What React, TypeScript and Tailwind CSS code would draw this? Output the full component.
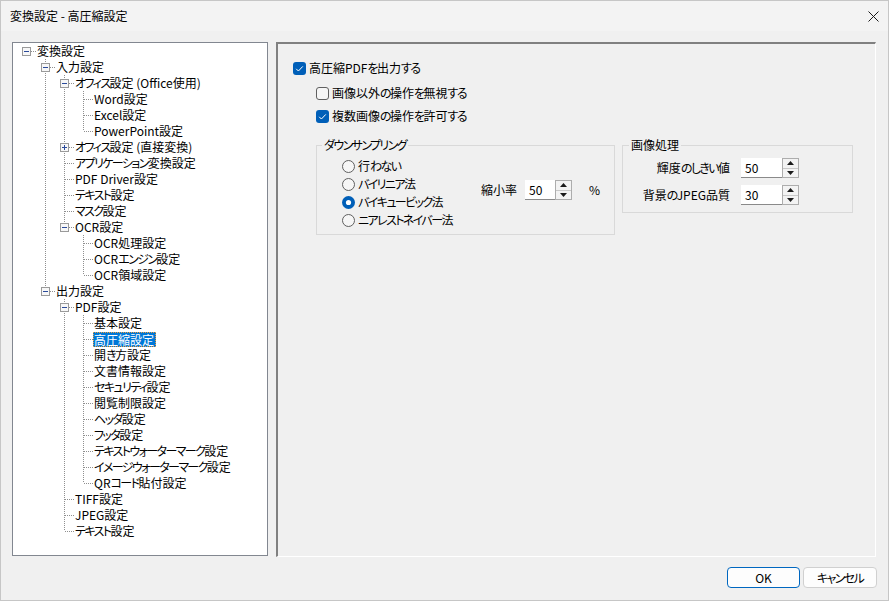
import React from "react";

type Node = { level: number; label: string; exp?: "open" | "closed"; selected?: boolean };

const tree: Node[] = [
  { level: 0, label: "変換設定", exp: "open" },
  { level: 1, label: "入力設定", exp: "open" },
  { level: 2, label: "オフィス設定 (Office使用)", exp: "open" },
  { level: 3, label: "Word設定" },
  { level: 3, label: "Excel設定" },
  { level: 3, label: "PowerPoint設定" },
  { level: 2, label: "オフィス設定 (直接変換)", exp: "closed" },
  { level: 2, label: "アプリケーション変換設定" },
  { level: 2, label: "PDF Driver設定" },
  { level: 2, label: "テキスト設定" },
  { level: 2, label: "マスク設定" },
  { level: 2, label: "OCR設定", exp: "open" },
  { level: 3, label: "OCR処理設定" },
  { level: 3, label: "OCRエンジン設定" },
  { level: 3, label: "OCR領域設定" },
  { level: 1, label: "出力設定", exp: "open" },
  { level: 2, label: "PDF設定", exp: "open" },
  { level: 3, label: "基本設定" },
  { level: 3, label: "高圧縮設定", selected: true },
  { level: 3, label: "開き方設定" },
  { level: 3, label: "文書情報設定" },
  { level: 3, label: "セキュリティ設定" },
  { level: 3, label: "閲覧制限設定" },
  { level: 3, label: "ヘッダ設定" },
  { level: 3, label: "フッタ設定" },
  { level: 3, label: "テキストウォーターマーク設定" },
  { level: 3, label: "イメージウォーターマーク設定" },
  { level: 3, label: "QRコード貼付設定" },
  { level: 2, label: "TIFF設定" },
  { level: 2, label: "JPEG設定" },
  { level: 2, label: "テキスト設定" },
];

// Narrow the kana runs, as the proportional kana of the original UI font are narrower
function J({ t }: { t: string }) {
  const parts = t.split(/([\u3040-\u30ff]+)/);
  return (
    <>
      {parts.map((p, i) =>
        /^[\u3040-\u30ff]+$/.test(p) ? (
          <span key={i} className="tracking-[-1.6px]">
            {p}
          </span>
        ) : (
          <React.Fragment key={i}>{p}</React.Fragment>
        )
      )}
    </>
  );
}

function hasNext(i: number): boolean {
  const l = tree[i].level;
  for (let j = i + 1; j < tree.length; j++) {
    if (tree[j].level < l) return false;
    if (tree[j].level === l) return true;
  }
  return false;
}

function ancestorIndex(i: number, level: number): number {
  for (let j = i - 1; j >= 0; j--) {
    if (tree[j].level === level) return j;
  }
  return -1;
}

const LINE = "#8f8f8f";

function Cell({ vFull, own, top, bottom, exp }: { vFull?: boolean; own?: boolean; top?: boolean; bottom?: boolean; exp?: "open" | "closed" }) {
  return (
    <svg width="19" height="16" className="shrink-0" shapeRendering="crispEdges">
      {vFull && <line x1="9.5" y1="0" x2="9.5" y2="16" stroke={LINE} strokeDasharray="1 1" />}
      {own && top && <line x1="9.5" y1="0" x2="9.5" y2="8" stroke={LINE} strokeDasharray="1 1" />}
      {own && bottom && <line x1="9.5" y1="8" x2="9.5" y2="16" stroke={LINE} strokeDasharray="1 1" />}
      {own && <line x1="10" y1="8.5" x2="19" y2="8.5" stroke={LINE} strokeDasharray="1 1" />}
      {own && exp && (
        <g>
          <rect x="5.5" y="4.5" width="8" height="8" fill="#f7f7f7" stroke="#9a9a9a" />
          <line x1="7" y1="8.5" x2="12" y2="8.5" stroke="#2a4a9a" />
          {exp === "closed" && <line x1="9.5" y1="6" x2="9.5" y2="11" stroke="#2a4a9a" />}
        </g>
      )}
    </svg>
  );
}

function TreeRow({ i }: { i: number }) {
  const n = tree[i];
  const cells = [];
  for (let k = 0; k < n.level; k++) {
    const a = ancestorIndex(i, k);
    cells.push(<Cell key={k} vFull={a >= 0 && hasNext(a)} />);
  }
  cells.push(<Cell key="own" own top={n.level > 0} bottom={hasNext(i)} exp={n.exp} />);
  return (
    <div className="flex h-4 items-center">
      {cells}
      {n.selected ? (
        <span className="h-[15px] pl-[1px] pr-[2px] leading-[15px] bg-[#0078d7] text-white outline outline-1 outline-dotted outline-[#f0a040] -outline-offset-1 whitespace-nowrap">
          <J t={n.label} />
        </span>
      ) : (
        <span className="pl-[1px] leading-4 whitespace-nowrap text-black">
          <J t={n.label} />
        </span>
      )}
    </div>
  );
}

function Checkbox({ checked }: { checked?: boolean }) {
  return checked ? (
    <svg width="13" height="13" className="shrink-0">
      <rect x="0" y="0" width="13" height="13" rx="3" fill="#005fb8" />
      <path d="M3.2 6.8 L5.4 9 L9.8 4.4" fill="none" stroke="#ffffff" strokeWidth="1" />
    </svg>
  ) : (
    <svg width="13" height="13" className="shrink-0">
      <rect x="0.5" y="0.5" width="12" height="12" rx="2.5" fill="#f6f6f6" stroke="#606060" />
    </svg>
  );
}

function Radio({ checked }: { checked?: boolean }) {
  return checked ? (
    <svg width="13" height="13" className="shrink-0">
      <circle cx="6.5" cy="6.5" r="6.5" fill="#005fb8" />
      <circle cx="6.5" cy="6.5" r="2.6" fill="#ffffff" />
    </svg>
  ) : (
    <svg width="13" height="13" className="shrink-0">
      <circle cx="6.5" cy="6.5" r="6" fill="#f6f6f6" stroke="#5f5f5f" />
    </svg>
  );
}

function Spin({ value, inputClass }: { value: string; inputClass: string }) {
  return (
    <div className="flex h-[20px]">
      <div className={inputClass + " h-[20px] bg-white border-b border-[#8a8a8a] pl-[4px] leading-[19px]"}>{value}</div>
      <div className="flex w-[17px] flex-col border border-[#adadad] bg-[#f3f3f3]">
        <div className="flex flex-1 items-center justify-center border-b border-[#c8c8c8]">
          <svg width="7" height="4"><path d="M0 4 L3.5 0 L7 4 Z" fill="#1a1a1a" /></svg>
        </div>
        <div className="flex flex-1 items-center justify-center">
          <svg width="7" height="4"><path d="M0 0 L3.5 4 L7 0 Z" fill="#1a1a1a" /></svg>
        </div>
      </div>
    </div>
  );
}

export default function App() {
  return (
    <div className="w-[889px] h-[601px] overflow-hidden border border-[#c6c6c6] bg-[#f0f0f0] text-[12px] text-black font-['Noto_Sans_CJK_JP',sans-serif] [font-feature-settings:'palt'] flex flex-col">
      {/* Title bar */}
      <div className="h-[30px] shrink-0 bg-[#f3f3f3] flex items-center justify-between pl-[9px] pr-[9px]">
        <span className="leading-4">変換設定 - 高圧縮設定</span>
        <svg width="11" height="11" viewBox="0 0 11 11">
          <path d="M0.5 0.5 L10.5 10.5 M10.5 0.5 L0.5 10.5" stroke="#1a1a1a" strokeWidth="1" />
        </svg>
      </div>

      {/* Main */}
      <div className="flex items-start gap-[8px] pl-[11px] pt-[11px]">
        {/* Tree */}
        <div className="w-[256px] h-[514px] shrink-0 bg-white border border-[#828790] pl-[4px] overflow-hidden">
          {tree.map((_, i) => (
            <TreeRow key={i} i={i} />
          ))}
        </div>

        {/* Panel */}
        <div className="w-[600px] h-[515px] shrink-0 border-t-2 border-l-2 border-t-[#808080] border-l-[#808080] border-b border-r border-b-white border-r-white bg-[#f0f0f0] pt-[16px]">
          <div className="flex h-4 items-center pl-[15px] gap-[3px]">
            <Checkbox checked />
            <span className="leading-4"><J t="高圧縮PDFを出力する" /></span>
          </div>
          <div className="flex h-4 items-center pl-[38px] gap-[3px] mt-[9px]">
            <Checkbox />
            <span className="leading-4"><J t="画像以外の操作を無視する" /></span>
          </div>
          <div className="flex h-4 items-center pl-[38px] gap-[3px] mt-[7px]">
            <Checkbox checked />
            <span className="leading-4"><J t="複数画像の操作を許可する" /></span>
          </div>

          <div className="flex items-start gap-[7px] ml-[38px] mt-[13px]">
            <fieldset className="w-[299px] h-[98px] border border-[#d9d9d9]">
              <legend className="ml-[5px] px-[2px] leading-4"><J t="ダウンサンプリング" /></legend>
              <div className="flex pl-[25px] pt-[4px]">
                <div className="w-[139px] flex flex-col">
                  {[
                    ["行わない", false],
                    ["バイリニア法", false],
                    ["バイキュービック法", true],
                    ["ニアレストネイバー法", false],
                  ].map(([l, c]) => (
                    <div key={l as string} className="flex h-[18px] items-center gap-[3px]">
                      <Radio checked={c as boolean} />
                      <span className="leading-4"><J t={l as string} /></span>
                    </div>
                  ))}
                </div>
                <div className="flex items-center mt-[23px] h-[20px]">
                  <span className="leading-4 w-[44px]">縮小率</span>
                  <Spin value="50" inputClass="w-[30px]" />
                  <span className="leading-4 ml-[17px]">%</span>
                </div>
              </div>
            </fieldset>

            <fieldset className="w-[231px] h-[76px] border border-[#d9d9d9]">
              <legend className="ml-[6px] px-[2px] leading-4">画像処理</legend>
              <div className="flex flex-col gap-[7px] pt-[5px]">
                <div className="flex items-center h-[20px]">
                  <span className="w-[107px] text-right leading-4"><J t="輝度のしきい値" /></span>
                  <div className="ml-[11px]">
                    <Spin value="50" inputClass="w-[41px]" />
                  </div>
                </div>
                <div className="flex items-center h-[20px]">
                  <span className="w-[107px] text-right leading-4"><J t="背景のJPEG品質" /></span>
                  <div className="ml-[11px]">
                    <Spin value="30" inputClass="w-[41px]" />
                  </div>
                </div>
              </div>
            </fieldset>
          </div>
        </div>
      </div>

      {/* Footer */}
      <div className="flex justify-end gap-[3px] pr-[11px] mt-[10px]">
        <button className="w-[73px] h-[21px] rounded-[4px] border border-[#0067c0] bg-[#fdfdfd] leading-4 text-black">OK</button>
        <button className="w-[74px] h-[21px] rounded-[4px] border border-[#d0d0d0] bg-[#fdfdfd] leading-4 text-black"><J t="キャンセル" /></button>
      </div>
    </div>
  );
}
